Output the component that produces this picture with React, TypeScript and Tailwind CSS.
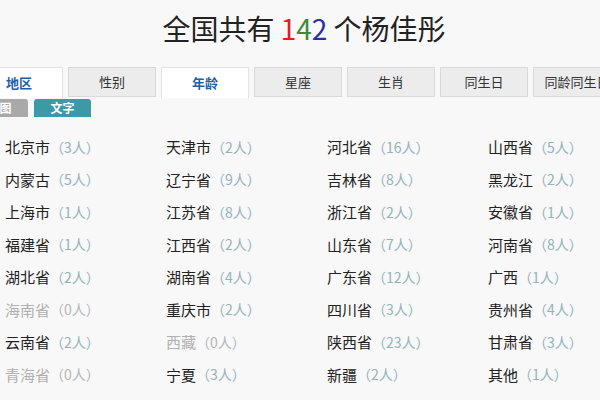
import React from 'react';

const tabs = [
  { label: '地区', active: true },
  { label: '性别', active: false },
  { label: '年龄', active: true },
  { label: '星座', active: false },
  { label: '生肖', active: false },
  { label: '同生日', active: false },
  { label: '同龄同生日', active: false },
];

// 按行排列，每行四个地区
const regions: [string, number][] = [
  ['北京市', 3], ['天津市', 2], ['河北省', 16], ['山西省', 5],
  ['内蒙古', 5], ['辽宁省', 9], ['吉林省', 8], ['黑龙江', 2],
  ['上海市', 1], ['江苏省', 8], ['浙江省', 2], ['安徽省', 1],
  ['福建省', 1], ['江西省', 2], ['山东省', 7], ['河南省', 8],
  ['湖北省', 2], ['湖南省', 4], ['广东省', 12], ['广西', 1],
  ['海南省', 0], ['重庆市', 2], ['四川省', 3], ['贵州省', 4],
  ['云南省', 2], ['西藏', 0], ['陕西省', 23], ['甘肃省', 3],
  ['青海省', 0], ['宁夏', 3], ['新疆', 2], ['其他', 1],
];

const App = () => {
  return (
    <div className="w-[600px] h-[400px] overflow-hidden bg-[#f8f8f8] font-['Noto_Sans_CJK_SC',sans-serif]">
      {/* Title */}
      <div className="h-[67px] pt-[8px] pl-[8px] text-center">
        <h1 className="text-[28px] leading-[40px] text-[#222]">
          全国共有 <span className="text-[#d8231f]">1</span>
          <span className="text-[#3a8b3c]">4</span>
          <span className="text-[#2b2fa6]">2</span> 个杨佳彤
        </h1>
      </div>

      {/* Tabs */}
      <div className="flex gap-[5px] ml-[-25px] h-[31px]">
        {tabs.map((t) => (
          <div
            key={t.label}
            className={
              t.active
                ? 'w-[88px] shrink-0 h-[31px] flex items-center justify-center bg-white border border-b-0 border-[#e2e2e2] text-[13px] font-bold text-[#1d5fa6]'
                : 'w-[88px] shrink-0 h-[30px] flex items-center justify-center bg-[#ececec] border border-[#d9d9d9] text-[13px] text-[#333]'
            }
          >
            {t.label}
          </div>
        ))}
      </div>

      {/* Sub tabs */}
      <div className="flex gap-[6px] ml-[-29px] mt-[1px]">
        <div className="w-[57px] h-[18px] rounded-t-[3px] bg-[#a9a9a9] text-white text-[12px] font-bold leading-[18px] text-center">
          地图
        </div>
        <div className="w-[57px] h-[18px] rounded-t-[3px] bg-[#3c9aa6] text-white text-[12px] font-bold leading-[18px] text-center">
          文字
        </div>
      </div>

      {/* Region list */}
      <div className="grid grid-cols-[161px_161px_161px_161px] pl-[5px] mt-[14px]">
        {regions.map(([name, n]) => {
          const empty = n === 0;
          return (
            <div key={name} className="h-[32.5px] flex items-center whitespace-nowrap text-[15px]">
              <span className={empty ? 'text-[#b0b0b0]' : 'text-[#222]'}>{name}</span>
              <span className={empty ? 'text-[#b5b5b5] text-[14px]' : 'text-[#93b3b8] text-[14px]'}>
                （{n}人）
              </span>
            </div>
          );
        })}
      </div>
    </div>
  );
};

export default App;
